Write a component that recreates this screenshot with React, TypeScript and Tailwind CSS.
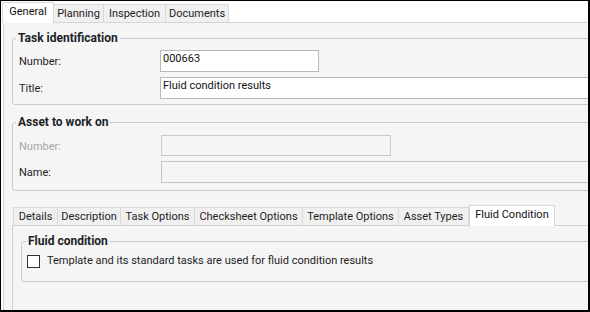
import type { ReactNode } from 'react'

const topTabs = [
  { label: 'General', w: 'w-[52px]', active: true },
  { label: 'Planning', w: 'w-[50px]' },
  { label: 'Inspection', w: 'w-[62px]' },
  { label: 'Documents', w: 'w-[63px]' },
]

const innerTabs = [
  { label: 'Details', w: 'w-[45px]' },
  { label: 'Description', w: 'w-[63px]' },
  { label: 'Task Options', w: 'w-[74px]' },
  { label: 'Checksheet Options', w: 'w-[108px]' },
  { label: 'Template Options', w: 'w-[96px]' },
  { label: 'Asset Types', w: 'w-[70px]' },
  { label: 'Fluid Condition', w: 'w-[86px]', active: true },
]

function Tab({ label, w, active, first }: { label: string; w: string; active?: boolean; first?: boolean }) {
  if (active) {
    return (
      <div className={`${w} relative z-10 -mb-px flex h-[21px] shrink-0 items-start justify-center border-x border-t border-[#d9d9d9] bg-white pt-[2px] text-[#111]`}>
        {label}
      </div>
    )
  }
  return (
    <div className={`${w} flex h-[18px] shrink-0 items-center justify-center border-t border-r border-[#d9d9d9] bg-[#f0f0f0] pt-px text-[#1e1e1e] ${first ? 'border-l' : ''}`}>
      {label}
    </div>
  )
}

function Group({ title, children, className = '', legendCls = 'ml-[3px]' }: { title: string; children: ReactNode; className?: string; legendCls?: string }) {
  return (
    <fieldset className={`w-[640px] shrink-0 rounded-[3px] border border-[#c6cad1] ${className}`}>
      <legend className={`${legendCls} px-[2px] text-[12px] leading-[14px] font-bold text-[#1b1f27]`}>{title}</legend>
      {children}
    </fieldset>
  )
}

function Row({ label, labelW, disabled, children }: { label: string; labelW: string; disabled?: boolean; children: ReactNode }) {
  return (
    <div className="flex items-center">
      <span className={`${labelW} shrink-0 pt-[2px] ${disabled ? 'text-[#a6a6a6]' : 'text-[#1e1e1e]'}`}>{label}</span>
      {children}
    </div>
  )
}

export default function App() {
  return (
    <div className="box-border flex h-[312px] w-[590px] flex-col overflow-hidden border-t border-l border-r-2 border-b-2 border-black bg-white font-['Roboto','Liberation_Sans',sans-serif] text-[11px] leading-[14px]">
      <div className="flex h-[21px] shrink-0 items-end pl-px">
        {topTabs.map(t => <Tab key={t.label} {...t} />)}
      </div>

      <div className="ml-[2px] flex w-[700px] flex-1 flex-col border-t border-l border-[#d5d5d5] bg-[#f5f5f5] pl-[8px]">
        <Group title="Task identification" className="mt-[8px]">
          <div className="flex flex-col gap-[5px] pt-[5px] pb-[5px] pl-[6px]">
            <Row label="Number:" labelW="w-[141px]">
              <div className="h-[22px] w-[159px] border border-[#b9b9b9] bg-white pt-px pl-[2px] text-[#111]">000663</div>
            </Row>
            <Row label="Title:" labelW="w-[141px]">
              <div className="h-[22px] w-[470px] border border-[#b9b9b9] bg-white pt-px pl-[2px] text-[#111]">Fluid condition results</div>
            </Row>
          </div>
        </Group>

        <Group title="Asset to work on" className="mt-[10px]">
          <div className="flex flex-col gap-[5px] pt-[6px] pb-[7px] pl-[6px]">
            <Row label="Number:" labelW="w-[142px]" disabled>
              <div className="h-[21px] w-[230px] border border-[#cacaca] bg-[#f5f5f5]" />
            </Row>
            <Row label="Name:" labelW="w-[142px]">
              <div className="h-[22px] w-[470px] border border-[#c4c4c4] bg-[#f5f5f5]" />
            </Row>
          </div>
        </Group>

        <div className="mt-[14px] flex h-[20px] shrink-0 items-end pl-px">
          {innerTabs.map((t, i) => <Tab key={t.label} {...t} first={i === 0} />)}
        </div>
        <div className="flex w-[690px] flex-1 flex-col border-t border-l border-[#d2d2d2] bg-[#f5f5f5] pl-[8px]">
          <Group title="Fluid condition" className="mt-[8px]" legendCls="ml-[4px]">
            <div className="flex items-center gap-[7px] pt-[6px] pb-[13px] pl-[5px]">
              <span className="h-[13px] w-[13px] shrink-0 border border-[#333] bg-white" />
              <span className="text-[#1e1e1e]">Template and its standard tasks are used for fluid condition results</span>
            </div>
          </Group>
        </div>
      </div>
    </div>
  )
}
